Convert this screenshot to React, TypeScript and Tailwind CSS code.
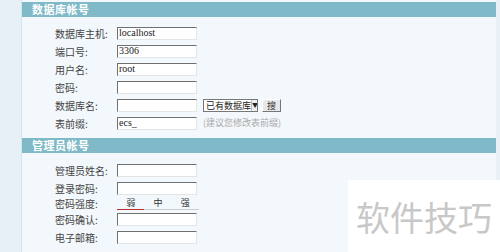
const font = { fontFamily: '"SimSun", "Noto Sans CJK SC", sans-serif' };

const Input = ({ value = '' }: { value?: string }) => (
    <div className="w-[80px] h-[13px] bg-white border border-t-[#707070] border-l-[#707070] border-r-[#e4e4e4] border-b-[#e4e4e4] flex items-center px-[1px] text-[10px] leading-none text-[#222] font-['Liberation_Serif',serif]">
        {value}
    </div>
);

const Row = ({ label, children, h = 'h-[18px]' }: { label: string; children?: React.ReactNode; h?: string }) => (
    <div className={`flex items-center ${h}`}>
        <div className="w-[62px] pl-[33px] box-content text-[10px] text-[#444] whitespace-nowrap">{label}</div>
        {children}
    </div>
);

const Header = ({ title }: { title: string }) => (
    <div className="h-[15px] bg-[#80b9c8] flex items-center pl-[10px] text-[11px] font-semibold text-white tracking-[0.5px]">
        {title}
    </div>
);

export default function App() {
    return (
        <div className="w-[500px] h-[252px] bg-[#e6f0f6] flex overflow-hidden relative" style={font}>
            <div className="w-[22px] shrink-0 border-r border-[#d6e4ec]" />
            <div className="w-[474px] bg-[#f3f8fc] pt-[2px]">
                <Header title="数据库帐号" />
                <div className="pt-[7px] pb-[6px]">
                    <Row label="数据库主机:"><Input value="localhost" /></Row>
                    <Row label="端口号:"><Input value="3306" /></Row>
                    <Row label="用户名:"><Input value="root" /></Row>
                    <Row label="密码:"><Input /></Row>
                    <Row label="数据库名:">
                        <Input />
                        <div className="ml-[6px] w-[55px] h-[13px] bg-white border border-[#777] flex items-center text-[9px] leading-none text-[#222] whitespace-nowrap overflow-hidden">
                            <span className="pl-[2px] flex-1">已有数据库</span>
                            <span className="w-[10px] h-[11px] border-l border-[#bbb] bg-[#eee] flex items-center justify-center text-[6px]">▼</span>
                        </div>
                        <div className="ml-[4px] w-[19px] h-[13px] bg-[#e8e8e8] border border-t-[#fff] border-l-[#fff] border-r-[#777] border-b-[#777] flex items-center justify-center text-[9px] leading-none text-[#333]">搜</div>
                    </Row>
                    <Row label="表前缀:">
                        <Input value="ecs_" />
                        <span className="ml-[6px] text-[9px] text-[#aaa]">(建议您修改表前缀)</span>
                    </Row>
                </div>
                <Header title="管理员帐号" />
                <div className="pt-[8px]">
                    <Row label="管理员姓名:"><Input /></Row>
                    <Row label="登录密码:"><Input /></Row>
                    <Row label="密码强度:" h="h-[13px]">
                        <div className="flex w-[82px] text-[9px] text-[#333] leading-none">
                            <div className="flex-1 text-center pb-[2px] border-b border-[#c03030]">弱</div>
                            <div className="flex-1 text-center pb-[2px] border-b border-[#ccc]">中</div>
                            <div className="flex-1 text-center pb-[2px] border-b border-[#ccc]">强</div>
                        </div>
                    </Row>
                    <Row label="密码确认:"><Input /></Row>
                    <Row label="电子邮箱:"><Input /></Row>
                </div>
            </div>
            <div className="w-[4px] bg-[#e9f1f6]" />
            <div className="absolute right-0 bottom-0 w-[152px] h-[72px] bg-white flex items-center justify-center text-[34px] text-[#c8c8c8] font-['Noto_Sans_CJK_SC',sans-serif]">
                软件技巧
            </div>
        </div>
    );
}
